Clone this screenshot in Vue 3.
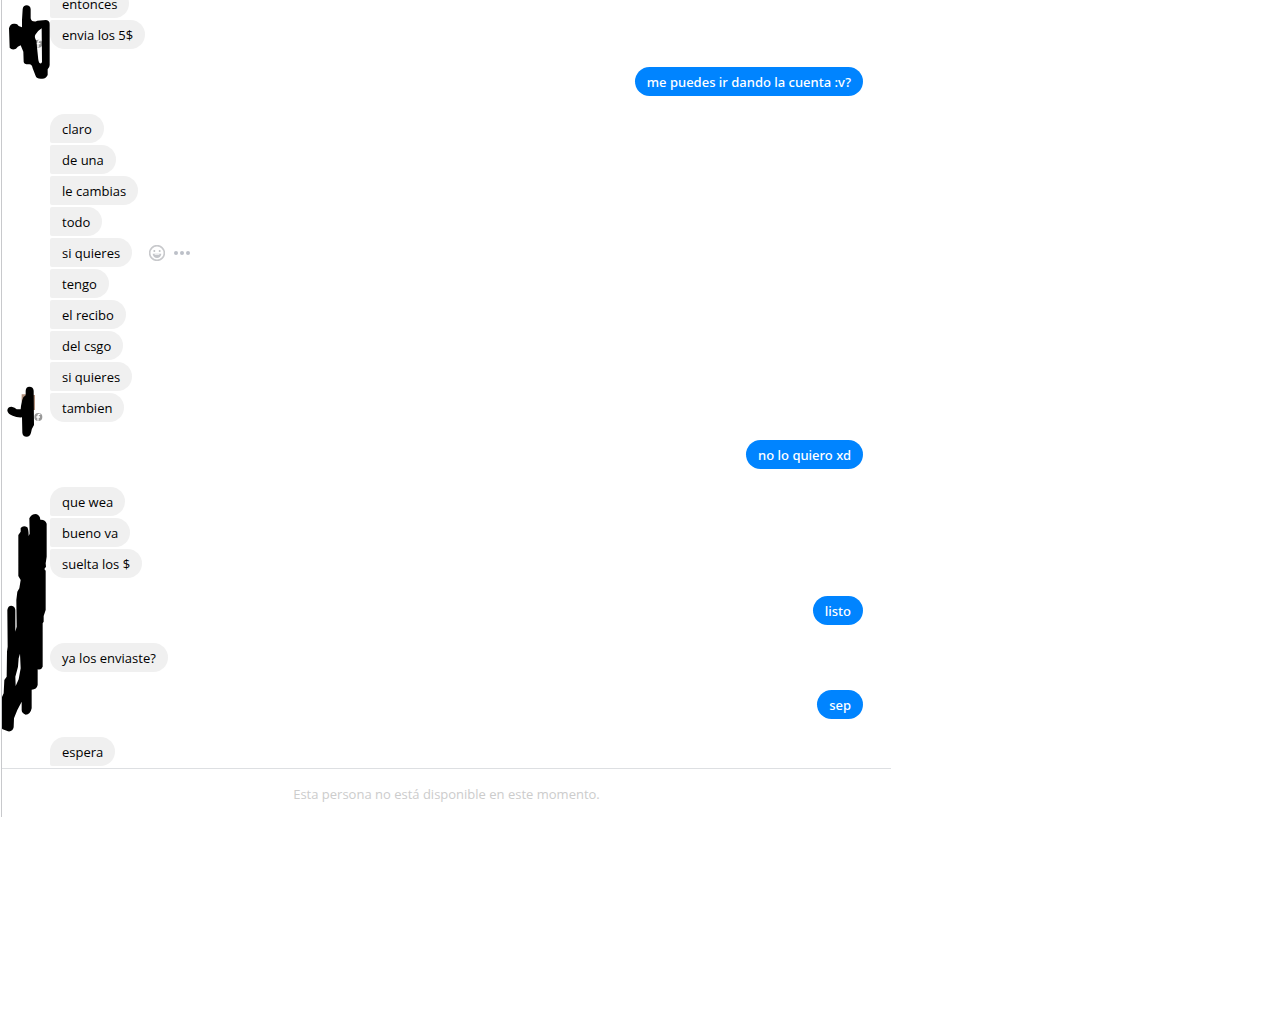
<script setup>
const groups = [
  { from: 'them', items: ['entonces', 'envia los 5$'], continued: true },
  { from: 'me', items: ['me puedes ir dando la cuenta :v?'] },
  {
    from: 'them',
    items: ['claro', 'de una', 'le cambias', 'todo', 'si quieres', 'tengo', 'el recibo', 'del csgo', 'si quieres', 'tambien'],
    active: 4,
  },
  { from: 'me', items: ['no lo quiero xd'] },
  { from: 'them', items: ['que wea', 'bueno va', 'suelta los $'] },
  { from: 'me', items: ['listo'] },
  { from: 'them', items: ['ya los enviaste?'] },
  { from: 'me', items: ['sep'] },
  { from: 'them', items: ['espera'], open: true },
]
</script>

<template>
  <main class="chat">
    <section class="thread">
      <div
        v-for="(group, g) in groups"
        :key="g"
        class="group"
        :class="[group.from, { continued: group.continued, open: group.open }]"
      >
        <div v-for="(text, i) in group.items" :key="i" class="row">
          <p class="bubble">{{ text }}</p>
          <div v-if="group.active === i" class="actions">
            <button type="button" aria-label="Reaccionar">
              <svg width="16" height="16" viewBox="0 0 48 48">
                <circle cx="24" cy="24" r="22" fill="none" stroke="#c8c9cc" stroke-width="5" />
                <circle cx="16" cy="18" r="3" fill="#c0c2c6" />
                <circle cx="32" cy="18" r="3" fill="#c0c2c6" />
                <path d="M11 26H37Q35 39 24 39T11 26Z" fill="#c3c5c9" />
                <path d="M17 28H31V30H17Z" fill="#fff" />
              </svg>
            </button>
            <button type="button" aria-label="Más opciones">
              <svg width="16" height="16" viewBox="0 0 16 16" fill="#bcc0c8">
                <circle cx="2" cy="8" r="2" />
                <circle cx="8" cy="8" r="2" />
                <circle cx="14" cy="8" r="2" />
              </svg>
            </button>
          </div>
        </div>
      </div>

      <svg class="marks" width="50" height="768" viewBox="0 0 150 2304" aria-hidden="true">
        <path d="M66 64H78V90H66ZM92 62L108 66V80H92Z" fill="#a98672" />
        <circle cx="115" cy="131" r="12" fill="#999" />
        <path d="M122 122H117Q114 123 114 128V142M109 131H121" fill="none" stroke="#fff" stroke-width="4" />
        <path
          fill-rule="evenodd"
          d="M68 28C68 12 92 12 92 28V55Q96 70 112 62L138 60Q150 62 149 74V195Q149 202 143 208V225Q138 237 125 236Q110 237 107 228L98 205Q96 193 88 193Q72 194 71 185L70 155 62 136Q52 140 48 146Q36 152 29 143L27 85Q30 70 43 71Q52 70 56 78L66 82V60ZM125 85L126 185Q125 192 120 190Q115 188 114 170L109 122Q102 110 106 104Q116 90 125 85Z"
        />
        <path d="M65 1183H78V1205H65ZM98 1185H105V1230H98Z" fill="#b08f7b" />
        <circle cx="115" cy="1251" r="12" fill="#999" />
        <path d="M121 1243H118Q114 1243 114 1248V1262M109 1251H120" fill="none" stroke="#fff" stroke-width="4" />
        <path
          d="M77 1172Q78 1160 88 1160Q100 1160 101 1172L102 1275Q95 1285 93 1298Q90 1310 80 1310Q68 1310 67 1298L66 1252Q50 1253 38 1247Q24 1242 22 1232Q22 1220 35 1220Q45 1222 50 1228H62Q64 1205 70 1192L77 1186Z"
        />
        <path
          fill-rule="evenodd"
          d="M88 1555Q94 1542 108 1542Q120 1545 121 1559Q136 1558 140 1571V1670L137 1690 138 1700 133 1707 137 1712V1830L131 1848V1865L128 1870V2000Q124 2011 113 2008V2055Q110 2069 95 2069V2125Q91 2144 77 2144Q65 2140 65 2130V2105L52 2130 42 2155 41 2182Q38 2196 24 2194L8 2188Q3 2182 4 2175V2095L11 2080 13 2040 20 2030 21 1955 23 1940 22 1830Q24 1817 34 1817Q46 1819 46 1831V1895L50 1880 49 1800 52 1775 58 1765 62 1740 55 1728V1605L62 1595V1584Q70 1575 82 1582Q86 1590 86 1608L89 1601ZM60 1961L56 1975 54 2000 46 2030 47 2058 56 2038 62 2005Z"
        />
      </svg>
    </section>
    <footer class="notice">Esta persona no está disponible en este momento.</footer>
  </main>
</template>

<style>
body {
  background: #fff;
}
</style>

<style scoped>
.chat {
  box-sizing: border-box;
  max-width: 890px;
  margin-left: 1px;
  border-left: 1px solid #c8c9cc;
  font: 13px/17px "Open Sans", "Noto Sans", sans-serif;
  color: #000;
}
.thread {
  position: relative;
  display: flex;
  flex-direction: column;
  gap: 18px;
  padding: 0 28px 2px 48px;
  overflow: hidden;
}
.group {
  display: flex;
  flex-direction: column;
  gap: 2px;
}
.group.continued {
  margin-top: -11px;
}
.row {
  display: flex;
  align-items: center;
  gap: 17px;
}
.me .row {
  justify-content: flex-end;
}
.bubble {
  margin: 0;
  padding: 7px 12px 5px;
  border-radius: 2px 15px 15px 2px;
  background: #f0f0f0;
}
.group .row:first-child .bubble {
  border-top-left-radius: 15px;
}
.group .row:last-child .bubble {
  border-bottom-left-radius: 15px;
}
.continued .row:first-child .bubble {
  border-top-left-radius: 2px;
}
.open .row:last-child .bubble {
  border-bottom-left-radius: 2px;
}
.me .bubble {
  background: #0084ff;
  color: #fff;
  font-family: "Noto Sans", "Open Sans", sans-serif;
  font-weight: 500;
}
.actions {
  display: flex;
  gap: 9px;
}
.actions button {
  display: flex;
  padding: 0;
  border: 0;
  background: none;
  cursor: pointer;
}
.marks {
  position: absolute;
  top: 0;
  left: -2px;
}
.notice {
  padding: 17px 0 14px;
  border-top: 1px solid #dddfe2;
  color: #ccc;
  text-align: center;
}
</style>
